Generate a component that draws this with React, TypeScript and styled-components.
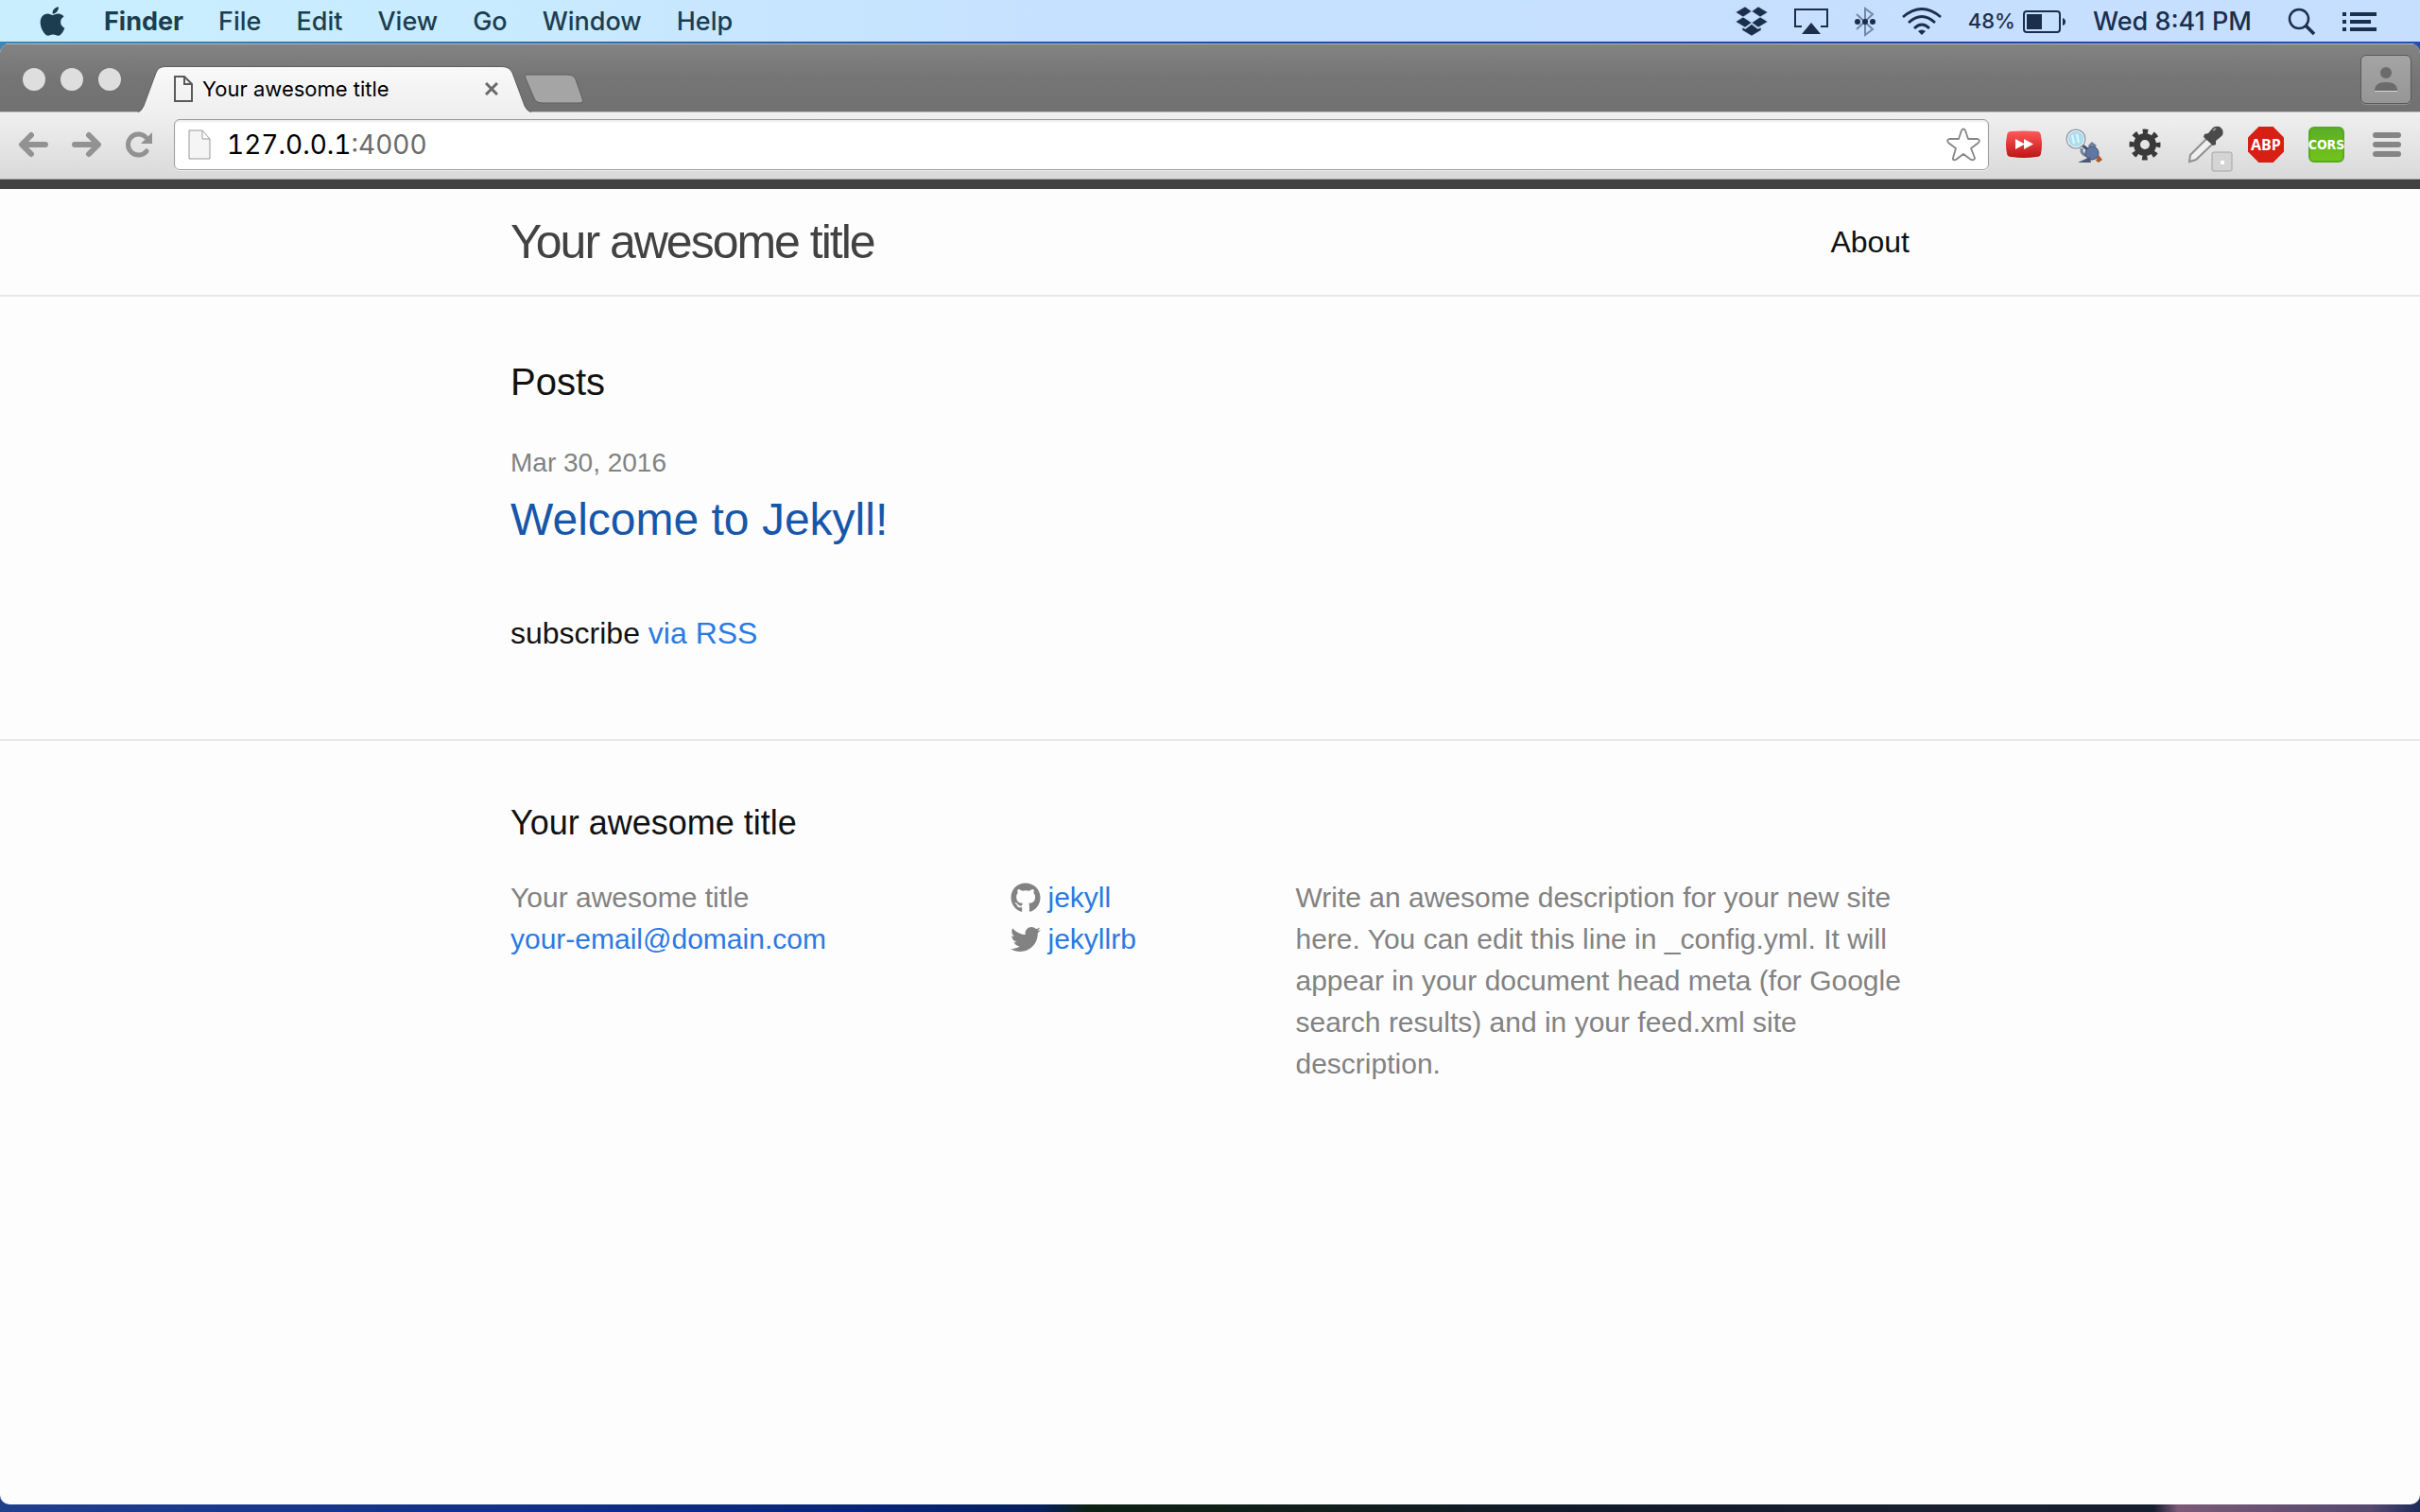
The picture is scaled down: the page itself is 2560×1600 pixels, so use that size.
import React from "react";
import styled, { createGlobalStyle } from "styled-components";
import { FaApple, FaGithub, FaTwitter } from "react-icons/fa";

const systemFont = `Inter, Roboto, "Liberation Sans", sans-serif`;
const siteFont = `"Liberation Sans", Arial, sans-serif`;

const GlobalStyle = createGlobalStyle`
  *, *::before, *::after { box-sizing: border-box; }
  body { margin: 0; font-family: ${siteFont}; }
  h1, h2, p, ul { margin: 0; padding: 0; font-weight: 400; }
  ul { list-style: none; }
  button { border: 0; padding: 0; background: none; font: inherit; color: inherit; display: flex; align-items: center; justify-content: center; }
  svg { display: block; flex: none; }
`;

const Desktop = styled.div`
  min-height: 100vh;
  display: flex;
  flex-direction: column;
  background:
    linear-gradient(90deg, #20408c 0%, #10308a 22%, #06257a 36%, #06205c 43%, #0c2014 45%, #101e1c 55%, #101a2c 65%, #182030 80%, #151e30 89%, #7b5a78 90%, #54486e 98%, #1c2c5c 100%) bottom / 100% 60px no-repeat,
    linear-gradient(90deg, #3a87b8 0%, #1d4fa8 50%, #1c46a6 80%, #2150b8 100%);
`;

const MenuBar = styled.header`
  height: 44px;
  margin-bottom: 2px;
  padding: 1px 46px 0 38px;
  display: flex;
  align-items: center;
  justify-content: space-between;
  background: linear-gradient(90deg, #c9efff 0%, #c8ebff 20%, #c6e0ff 45%, #c7dfff 100%);
  font: 500 27px/43px ${systemFont};
  color: #1b2e4c;
`;

const MenuGroup = styled.nav<{ $gap: number }>`
  display: flex;
  align-items: center;
  gap: ${(p) => p.$gap}px;
`;

const MenuButton = styled.button<{ $strong?: boolean }>`
  && {
    color: #1c3d4f;
    font-weight: ${(p) => (p.$strong ? 700 : 500)};
  }
`;

const Battery = styled.span`
  display: flex;
  align-items: center;
  gap: 8px;
  font-size: 22px;
`;

const Clock = styled.span`
  padding-right: 10px;
`;

const BrowserWindow = styled.div`
  flex: 1;
  margin-bottom: 8px;
  display: flex;
  flex-direction: column;
  overflow: hidden;
  border-radius: 10px;
  background: #fdfdfd;
`;

const TabStrip = styled.div`
  height: 72px;
  padding: 0 9px 0 24px;
  display: flex;
  align-items: flex-end;
  background: linear-gradient(#838383, #757575 50%, #717171);
  border-top: 1px solid #b4b4b4;
`;

const WindowControls = styled.div`
  height: 68px;
  display: flex;
  align-items: center;
  gap: 16px;
  width: 122px;
`;

const WindowDot = styled.button`
  && {
    width: 24px;
    height: 24px;
    border-radius: 50%;
    background: #dedede;
  }
`;

const Tab = styled.div`
  position: relative;
  width: 416px;
  height: 48px;
  padding: 0 35px 0 38px;
  display: flex;
  align-items: center;
  gap: 10px;
  font: 400 22px/48px ${systemFont};
  color: #000;
`;

const TabShape = styled.svg`
  position: absolute;
  top: 0;
  left: 0;
  width: 100%;
  height: 49px;
`;

const TabTitle = styled.span`
  position: relative;
  flex: 1;
`;

const TabIcon = styled.span`
  position: relative;
`;

const TabClose = styled.button`
  position: relative;
`;

const NewTab = styled.button`
  && {
    height: 48px;
    margin-left: -8px;
  }
`;

const Profile = styled.button`
  && {
    width: 54px;
    height: 52px;
    margin: 0 0 8px auto;
    border: 1px solid #5a5a5a;
    border-radius: 6px;
    background: linear-gradient(#a4a4a4, #969696);
    box-shadow: 0 1px 0 #8f8f8f;
  }
`;

const Toolbar = styled.div`
  height: 72px;
  padding: 0 20px 2px 19px;
  display: flex;
  align-items: center;
  background: linear-gradient(#f0f0f0, #d9d9d9);
  border-top: 1px solid #bdbdbd;
  border-bottom: 1px solid #a8a8a8;
`;

const NavButtons = styled.div`
  display: flex;
  gap: 25px;
  padding-right: 23px;
`;

const AddressBar = styled.div`
  flex: 1;
  height: 54px;
  padding: 0 8px 0 14px;
  display: flex;
  align-items: center;
  border: 1px solid #9c9c9c;
  border-radius: 6px;
  background: #fff;
  box-shadow: inset 0 2px 2px #ededed, 0 1px 0 #f2f2f2;
`;

const Address = styled.div`
  flex: 1;
  margin-left: 17px;
  font: 400 28px/52px ${systemFont};
  font-variant-numeric: tabular-nums;
  color: #000;
`;

const Port = styled.span`
  color: #6b6b6b;
`;

const Extensions = styled.div`
  display: flex;
  align-items: center;
  gap: 26px;
  margin: 0 30px 0 18px;
`;

const Extension = styled.button`
  && {
    width: 38px;
    height: 38px;
  }
  svg {
    overflow: visible;
  }
`;

const Abp = styled(Extension)`
  && {
    background: #d71f14;
    color: #fff;
    clip-path: polygon(30% 0, 70% 0, 100% 30%, 100% 70%, 70% 100%, 30% 100%, 0 70%, 0 30%);
    font: 700 16px/38px "Open Sans", sans-serif;
  }
`;

const Cors = styled(Extension)`
  && {
    border: 2px solid #54ab1e;
    border-radius: 6px;
    background: linear-gradient(#5cae28, #72c31c);
    color: #fff;
    font: 700 14px/34px "Liberation Sans Narrow", "DejaVu Sans Condensed", sans-serif;
  }
`;

const Wrapper = styled.div`
  max-width: 1600px;
  margin: 0 auto;
  padding: 0 60px;
`;

const SiteHeader = styled.header`
  border-top: 10px solid #424242;
  border-bottom: 2px solid #e8e8e8;
`;

const HeaderRow = styled(Wrapper)`
  display: flex;
  justify-content: space-between;
  line-height: 112px;
`;

const SiteTitle = styled.a`
  font-size: 50px;
  letter-spacing: -2px;
  color: #424242;
  text-decoration: none;
`;

const NavLink = styled.a`
  font-size: 32px;
  color: #111;
  text-decoration: none;
`;

const Main = styled.main`
  padding: 60px 0 88px;
`;

const PageHeading = styled.h1`
  font-size: 40px;
  line-height: 60px;
  color: #111;
`;

const PostList = styled.ul`
  padding: 32px 0 60px;
`;

const PostDate = styled.time`
  display: block;
  font-size: 28px;
  line-height: 48px;
  color: #828282;
`;

const PostTitle = styled.h2`
  font-size: 48px;
  line-height: 72px;
`;

const Link = styled.a<{ $dark?: boolean }>`
  color: ${(p) => (p.$dark ? "#1756a9" : "#2a7ae2")};
  text-decoration: none;
`;

const Subscribe = styled.p`
  font-size: 32px;
  line-height: 48px;
  color: #111;
`;

const SiteFooter = styled.footer`
  padding: 60px 0;
  border-top: 2px solid #e8e8e8;
`;

const FooterHeading = styled.h2`
  margin-bottom: 30px;
  font-size: 36px;
  line-height: 54px;
  color: #111;
`;

const FooterColumns = styled.div`
  margin-left: -30px;
  display: grid;
  grid-template-columns: 35% 20% 45%;
  font-size: 30px;
  line-height: 44px;
  color: #828282;
`;

const FooterColumn = styled.div`
  padding-left: 30px;
`;

const SocialItem = styled.li`
  display: flex;
  align-items: center;
  gap: 8px;
`;

const menus = ["File", "Edit", "View", "Go", "Window", "Help"];

const Arrow = ({ back }: { back?: boolean }) => (
  <svg width="32" height="28" viewBox="0 0 32 28" fill="none" stroke="#929292" strokeWidth="6" strokeLinecap="round" strokeLinejoin="round">
    {back ? <path d="M14 4 4 14 14 24M5 14H29" /> : <path d="M18 4 28 14 18 24M27 14H3" />}
  </svg>
);

const App = () => (
  <Desktop>
    <GlobalStyle />
    <MenuBar>
      <MenuGroup $gap={37}>
        <MenuButton aria-label="Apple"><FaApple size={35} /></MenuButton>
        <MenuButton $strong>Finder</MenuButton>
        {menus.map((m) => <MenuButton key={m}>{m}</MenuButton>)}
      </MenuGroup>
      <MenuGroup $gap={28}>
        <svg width="34" height="32" viewBox="0 0 34 32" fill="#1b2e4c">
          <path d="M10 0 17 5 8 11 0 6ZM24 0 34 6 26 11 17 5ZM8 11 17 17 10 22 0 16ZM26 11 34 16 24 22 17 17ZM17 18.500 23.500 23.500 27 22V25L17 31 7 25V22L10.500 23.500Z" stroke="#c6dfff" strokeWidth=".6" />
        </svg>
        <svg width="36" height="28" viewBox="0 0 36 28" fill="none" stroke="#1b2e4c" strokeWidth="2">
          <path d="M8 19H1V1H35V19H28" /><path d="M18 15 28 27H8Z" fill="#1b2e4c" stroke="none" />
        </svg>
        <svg width="22" height="32" viewBox="0 0 22 32" fill="none">
          <path d="M2 8 19 24 11 30V2L19 8 2 24" stroke="#7388aa" strokeWidth="2" />
          <g fill="#1b2e4c"><circle cx="3" cy="16" r="3" /><circle cx="11" cy="16" r="3" /><circle cx="19" cy="16" r="3" /></g>
        </svg>
        <svg width="42" height="30" viewBox="0 0 42 30" fill="none" stroke="#1b2e4c" strokeWidth="2.800">
          <path d="M1 10Q21-7 41 10M7 16Q21 3 35 16M13 22Q21 14 29 22" /><path d="M17 25Q21 22 25 25L21 29Z" fill="#1b2e4c" stroke="none" />
        </svg>
        <Battery>
          48%
          <svg width="46" height="24" viewBox="0 0 46 24">
            <rect x="1" y="1" width="38" height="22" rx="3" fill="none" stroke="#1b2e4c" strokeWidth="2" />
            <rect x="4" y="4" width="16" height="16" fill="#1b2e4c" /><path d="M42 8Q45 9 45 12T42 16Z" fill="#1b2e4c" />
          </svg>
        </Battery>
        <Clock>Wed 8:41 PM</Clock>
        <svg width="30" height="30" viewBox="0 0 30 30" fill="none" stroke="#1b2e4c" strokeWidth="2.500">
          <circle cx="12" cy="12" r="10" /><path d="m19 19 9 9" strokeWidth="3.500" />
        </svg>
        <svg width="36" height="20" viewBox="0 0 36 20" fill="#1b2e4c">
          <path d="M0 0H4V4H0ZM8 0H36V4H8ZM0 8H4V12H0ZM8 8H30V12H8ZM0 16H4V20H0ZM8 16H36V20H8Z" />
        </svg>
      </MenuGroup>
    </MenuBar>

    <BrowserWindow>
      <TabStrip>
        <WindowControls>
          <WindowDot aria-label="Close" /><WindowDot aria-label="Minimize" /><WindowDot aria-label="Zoom" />
        </WindowControls>
        <Tab>
          <TabShape viewBox="0 0 416 49" preserveAspectRatio="none">
            <defs>
              <linearGradient id="tab" x1="0" y1="0" x2="0" y2="1"><stop stopColor="#f9f9f9" /><stop offset="1" stopColor="#efefef" /></linearGradient>
            </defs>
            <path d="M0 49Q4 47 6 42L19 7Q21 .5 29 .5H385Q393 .5 396 7L409 42Q411 47 416 49" fill="url(#tab)" stroke="#5e5e5e" />
          </TabShape>
          <TabIcon>
            <svg width="20" height="28" viewBox="0 0 20 28" fill="none" stroke="#5a5a5a" strokeWidth="2"><path d="M1 1H11L19 9V27H1ZM11 1V9H19" /></svg>
          </TabIcon>
          <TabTitle>Your awesome title</TabTitle>
          <TabClose aria-label="Close tab">
            <svg width="14" height="14" viewBox="0 0 14 14" stroke="#6a6a6a" strokeWidth="3"><path d="m1 1 12 12M13 1 1 13" /></svg>
          </TabClose>
        </Tab>
        <NewTab aria-label="New tab">
          <svg width="64" height="32" viewBox="0 0 64 32"><path d="M4 1H46Q53 1 55 6L62 26Q64 31 59 31H20Q13 31 11 26L2 5Q0 1 4 1Z" fill="#a5a5a5" stroke="#5e5e5e" /></svg>
        </NewTab>
        <Profile aria-label="Profile">
          <svg width="24" height="26" viewBox="0 0 24 26" fill="#6b6b6b"><circle cx="12" cy="6" r="6" /><path d="M0 25Q0 16 12 16T24 25Z" /><path d="M0 25.500H24" stroke="#d8d8d8" /></svg>
        </Profile>
      </TabStrip>

      <Toolbar>
        <NavButtons>
          <button aria-label="Back"><Arrow back /></button>
          <button aria-label="Forward"><Arrow /></button>
          <button aria-label="Reload">
            <svg width="28" height="28" viewBox="0 0 28 28" fill="none"><path d="M21 6A11 11 0 1 0 22 21" stroke="#929292" strokeWidth="5" strokeLinecap="round" /><path d="M28 1V13H16Z" fill="#929292" /></svg>
          </button>
        </NavButtons>
        <AddressBar>
          <svg width="24" height="32" viewBox="0 0 24 32" fill="#f5f5f5" stroke="#999"><path d="M1 1H15L23 10V31H1ZM15 1V10H23" /></svg>
          <Address>127.0.0.1<Port>:4000</Port></Address>
          <button aria-label="Bookmark this page">
            <svg width="36" height="36" viewBox="0 0 36 36" fill="#fff" stroke="#868686" strokeWidth="1.800" strokeLinejoin="round"><path d="M16 3Q18 0 20 3L23 12H33Q36 13 34 16L26 22 30 32Q30 35 26 34L18 28 10 34Q6 35 7 32L10 22 2 16Q0 13 3 12H13Z" /></svg>
          </button>
        </AddressBar>
        <Extensions>
          <Extension aria-label="Fast forward">
            <svg width="38" height="30" viewBox="0 0 38 30">
              <defs><linearGradient id="ff" x1="0" y1="0" x2="0" y2="1"><stop stopColor="#ff5a5a" /><stop offset="1" stopColor="#bd1414" /></linearGradient></defs>
              <path d="M6 1Q19 0 32 1Q37 1 37 6Q39 15 37 24Q37 28 32 28Q19 30 6 28Q1 28 1 24Q-1 15 1 6Q1 1 6 1Z" fill="url(#ff)" /><path d="M10 9 20 14.500 10 20ZM19 9 29 14.500 19 20Z" fill="#fff" />
            </svg>
          </Extension>
          <Extension aria-label="Inspector">
            <svg width="38" height="38" viewBox="0 0 38 38">
              <path d="m17 20 8 6" stroke="#44536b" strokeWidth="3" />
              <circle cx="10" cy="13" r="9" fill="#a9e0f2" stroke="#8595a8" strokeWidth="3" /><circle cx="10" cy="13" r="8.500" fill="none" stroke="#f4f8fb" strokeWidth="1.500" />
              <path d="m6 9 2 9M11 8l2 9" stroke="#e0f7ff" strokeWidth="2" />
              <path d="M16 23q-1 7 7 8M24 21l3-3 4 3" fill="none" stroke="#70829f" strokeWidth="3" />
              <circle cx="27" cy="28" r="7" fill="#5f78a3" stroke="#3c4b68" /><path d="M12 38 25 32 26 38Z" fill="#4c5b74" /><path d="m31 36 3-6 4 5-4 3Z" fill="#b0562f" />
            </svg>
          </Extension>
          <Extension aria-label="Settings">
            <svg width="38" height="38" viewBox="0 0 38 38" fill="none">
              <circle cx="19" cy="19" r="8.500" stroke="#393939" strokeWidth="7" /><circle cx="19" cy="19" r="14" stroke="#393939" strokeWidth="5" strokeDasharray="5.500 5.500" strokeDashoffset="2.750" />
            </svg>
          </Extension>
          <Extension aria-label="Color picker">
            <svg width="38" height="38" viewBox="0 0 38 38">
              <path d="M23 10 29 16 9 35 2 37 3 30Z" fill="#f0f0f0" stroke="#909090" strokeWidth="2" /><path d="m18 8 4-1 5-6q3-2 7-1l3 3q2 5-2 8l-5 4v4l-3 1-10-9Z" fill="#4a4a4a" /><path d="m27 4 3-2" stroke="#9a9a9a" strokeWidth="2" />
              <rect x="26" y="27" width="21" height="20" rx="2" fill="#d4d4d4" stroke="#a4a4a4" /><rect x="35" y="36" width="4" height="4" fill="#fff" />
            </svg>
          </Extension>
          <Abp>ABP</Abp>
          <Cors>CORS</Cors>
        </Extensions>
        <button aria-label="Menu">
          <svg width="30" height="26" viewBox="0 0 30 26" stroke="#858585" strokeWidth="6" strokeLinecap="round"><path d="M3 3H27M3 13H27M3 23H27" /></svg>
        </button>
      </Toolbar>

      <SiteHeader>
        <HeaderRow>
          <SiteTitle href="#">Your awesome title</SiteTitle>
          <NavLink href="#">About</NavLink>
        </HeaderRow>
      </SiteHeader>
      <Main>
        <Wrapper>
          <PageHeading>Posts</PageHeading>
          <PostList>
            <li>
              <PostDate dateTime="2016-03-30">Mar 30, 2016</PostDate>
              <PostTitle><Link href="#" $dark>Welcome to Jekyll!</Link></PostTitle>
            </li>
          </PostList>
          <Subscribe>subscribe <Link href="#">via RSS</Link></Subscribe>
        </Wrapper>
      </Main>
      <SiteFooter>
        <Wrapper>
          <FooterHeading>Your awesome title</FooterHeading>
          <FooterColumns>
            <FooterColumn>
              <ul>
                <li>Your awesome title</li>
                <li><Link href="#">your-email@domain.com</Link></li>
              </ul>
            </FooterColumn>
            <FooterColumn>
              <ul>
                <SocialItem><FaGithub size={32} /><Link href="#">jekyll</Link></SocialItem>
                <SocialItem><FaTwitter size={32} /><Link href="#">jekyllrb</Link></SocialItem>
              </ul>
            </FooterColumn>
            <FooterColumn>
              <p>Write an awesome description for your new site here. You can edit this line in _config.yml. It will appear in your document head meta (for Google search results) and in your feed.xml site description.</p>
            </FooterColumn>
          </FooterColumns>
        </Wrapper>
      </SiteFooter>
    </BrowserWindow>
  </Desktop>
);

export default App;
